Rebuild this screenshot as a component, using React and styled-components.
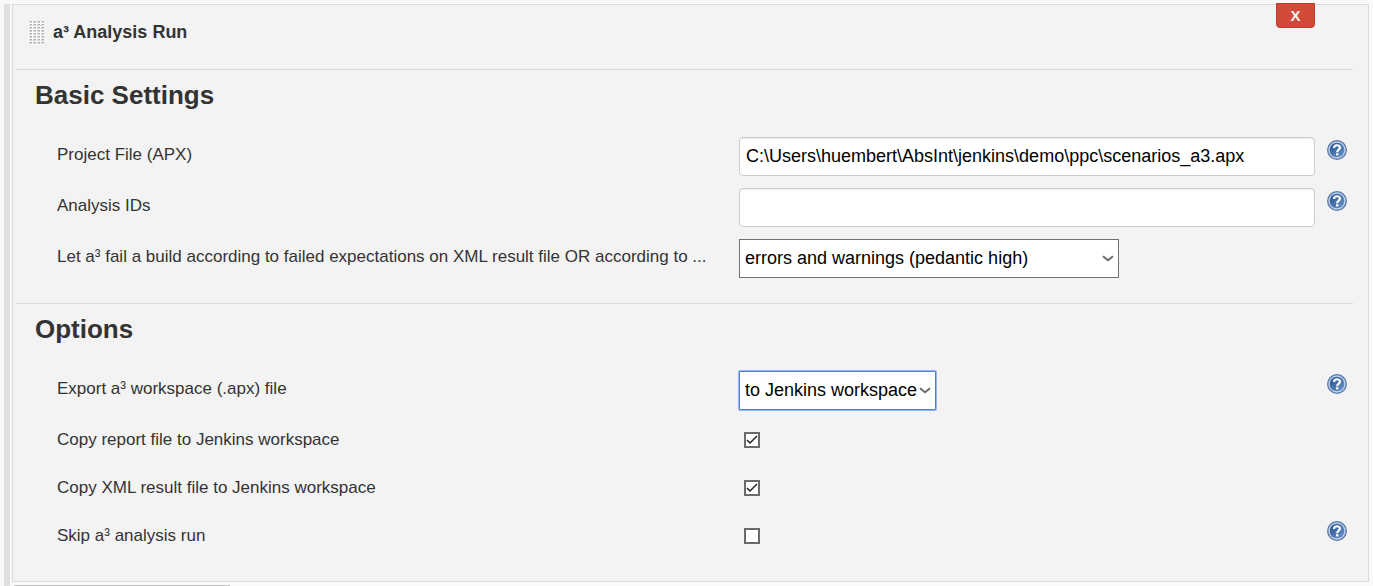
import React from "react";
import styled, { createGlobalStyle, css } from "styled-components";

const GlobalStyle = createGlobalStyle`
  *, *::before, *::after { box-sizing: border-box; }
  body {
    margin: 0;
    background: #f9f9f9;
    color: #333;
    font-family: "Liberation Sans", Arial, sans-serif;
    font-size: 18px;
    line-height: 24px;
  }
`;

const Page = styled.main`
  display: flex;
  gap: 2px;
  padding: 4px 4px 0;
`;

const Rail = styled.div`
  flex: 0 0 6px;
  background: #e0e0e0;
`;

const Column = styled.div`
  flex: 1;
  min-width: 0;
`;

const Panel = styled.form`
  border: 1px solid #d9d9d9;
  background: #f3f3f3;
  padding-bottom: 27px;
`;

const Header = styled.header`
  display: flex;
  align-items: flex-start;
  height: 64px;
  padding: 0 53px 0 15px;
`;

const Handle = styled.svg`
  width: 16px;
  height: 24px;
  margin: 16px 9px 0 0;
`;

const Title = styled.h1`
  flex: 1;
  margin: 15px 0 0;
  font-size: 18px;
  line-height: 24px;
`;

const DeleteButton = styled.button`
  width: 39px;
  height: 25px;
  margin-top: -2px;
  padding: 0;
  border: 1px solid #c03a2b;
  border-radius: 0 0 4px 4px;
  background: #d24939;
  color: #f2f2f2;
  font: bold 15px/22px "Liberation Sans", Arial, sans-serif;
`;

const Section = styled.section`
  margin: 0 15px 0 3px;
  padding: 0 6px 0 41px;
  border-top: 1px solid #d9d9d9;

  & + & { margin-top: 25px; }
`;

const Heading = styled.h2`
  margin: 0 0 26px -22px;
  padding-top: 9px;
  font-size: 26px;
  line-height: 32px;
`;

const Rows = styled.div`
  display: flex;
  flex-direction: column;
  gap: 12px;
`;

const Row = styled.div`
  display: grid;
  grid-template-columns: minmax(0, 682fr) minmax(0, 576fr) 32px;
  align-items: start;
  min-height: 36px;
`;

const Label = styled.label`
  padding: 6px 8px 6px 0;
  overflow: hidden;
  font-size: 17px;
  text-overflow: ellipsis;
  white-space: nowrap;
`;

const TextInput = styled.input`
  display: block;
  width: 100%;
  height: 39px;
  padding: 0 6px;
  border: 1px solid #ccc;
  border-radius: 4px;
  background: #fff;
  box-shadow: inset 0 1px 1px rgba(0, 0, 0, 0.075);
  color: #000;
  font: inherit;
`;

const SelectBox = styled.div`
  display: grid;
  align-items: center;
  width: ${(p) => (p.$wide ? "380px" : "197px")};
  max-width: 100%;

  > * { grid-area: 1 / 1; }
`;

const Select = styled.select`
  appearance: none;
  width: 100%;
  height: 39px;
  padding: 0 18px 2px 5px;
  border: 1px solid #707070;
  border-radius: 0;
  background: #fff;
  color: #000;
  font: inherit;
  ${(p) =>
    p.$active &&
    css`
      border-color: #5580c4;
      box-shadow: 0 0 0 1px #8fb8f5;
      border-radius: 1px;
    `}
`;

const Chevron = styled.svg`
  justify-self: end;
  width: 12px;
  height: 8px;
  margin-right: 5px;
  pointer-events: none;
`;

const Checkbox = styled.input`
  appearance: none;
  display: block;
  width: 16px;
  height: 16px;
  margin: 10px 5px;
  border: 2px solid #6b6b6b;
  background: #fff;

  &:checked {
    background: #fff
      url("data:image/svg+xml,%3Csvg xmlns='http://www.w3.org/2000/svg' viewBox='0 0 12 12'%3E%3Cpath d='M1 6l3 3 7-7' fill='none' stroke='%23222' stroke-width='1.5'/%3E%3C/svg%3E");
  }
`;

const HelpButton = styled.button`
  justify-self: end;
  width: 20px;
  height: 20px;
  margin-top: 3px;
  padding: 0;
  border: 0;
  background: none;

  svg { display: block; }
`;

const Footer = styled.div`
  padding: 3px 0 0 2px;
`;

const NextEdge = styled.div`
  width: 216px;
  height: 1px;
  background: #c4c4c4;
`;

const DOT_ROWS = [0, 1, 2, 3, 4, 5, 6, 7];
const DOT_COLUMNS = [0, 1, 2, 3];

function DragHandle() {
  return (
    <Handle viewBox="0 0 16 24" aria-hidden="true">
      <rect width="16" height="24" fill="#fafafa" />
      {DOT_ROWS.map((r) =>
        DOT_COLUMNS.map((c) => (
          <g key={`${r}-${c}`}>
            <rect x={c * 4 + 1} y={r * 3} width="3" height="2" fill="#d6d6d6" />
            <rect x={c * 4 + 2} y={r * 3} width="2" height="1" fill="#b0b0b0" />
          </g>
        ))
      )}
    </Handle>
  );
}

function Help({ topic }) {
  return (
    <HelpButton type="button" aria-label={`Help: ${topic}`}>
      <svg width="20" height="20" viewBox="0 0 20 20">
        <defs>
          <linearGradient id="helpFill" x1="0" y1="0" x2="1" y2="1">
            <stop offset="0" stopColor="#24508f" />
            <stop offset="1" stopColor="#6d97cb" />
          </linearGradient>
        </defs>
        <circle cx="10" cy="10" r="9.3" fill="#c3d3e8" stroke="#5578ad" strokeWidth="1.3" />
        <circle cx="10" cy="10" r="7.3" fill="url(#helpFill)" />
        <path d="M7 8C7 4.4 13 4.4 13 7.6C13 9.7 10.2 9.6 10.2 12.2" fill="none" stroke="#fff" strokeWidth="2.2" />
        <rect x="9" y="13.2" width="2.4" height="2.2" fill="#fff" />
      </svg>
    </HelpButton>
  );
}

function SelectField({ id, value, wide, active }) {
  return (
    <SelectBox $wide={wide}>
      <Select id={id} defaultValue={value} $active={active}>
        <option>{value}</option>
      </Select>
      <Chevron viewBox="0 0 12 8" aria-hidden="true">
        <path d="M1 1.2l5 4 5-4" fill="none" stroke="#6b6b6b" strokeWidth="2" />
      </Chevron>
    </SelectBox>
  );
}

function Field({ id, label, help, children }) {
  return (
    <Row>
      <Label htmlFor={id}>{label}</Label>
      <div>{children}</div>
      {help && <Help topic={label} />}
    </Row>
  );
}

export default function App() {
  return (
    <>
      <GlobalStyle />
      <Page>
        <Rail />
        <Column>
          <Panel>
            <Header>
              <DragHandle />
              <Title>a³ Analysis Run</Title>
              <DeleteButton type="button">X</DeleteButton>
            </Header>
            <Section>
              <Heading>Basic Settings</Heading>
              <Rows>
                <Field id="apx" label="Project File (APX)" help>
                  <TextInput id="apx" defaultValue={"C:\\Users\\huembert\\AbsInt\\jenkins\\demo\\ppc\\scenarios_a3.apx"} />
                </Field>
                <Field id="ids" label="Analysis IDs" help>
                  <TextInput id="ids" />
                </Field>
                <Field
                  id="fail"
                  label="Let a³ fail a build according to failed expectations on XML result file OR according to ..."
                >
                  <SelectField id="fail" value="errors and warnings (pedantic high)" wide />
                </Field>
              </Rows>
            </Section>
            <Section>
              <Heading>Options</Heading>
              <Rows>
                <Field id="export" label="Export a³ workspace (.apx) file" help>
                  <SelectField id="export" value="to Jenkins workspace" active />
                </Field>
                <Field id="report" label="Copy report file to Jenkins workspace">
                  <Checkbox id="report" type="checkbox" defaultChecked />
                </Field>
                <Field id="xml" label="Copy XML result file to Jenkins workspace">
                  <Checkbox id="xml" type="checkbox" defaultChecked />
                </Field>
                <Field id="skip" label="Skip a³ analysis run" help>
                  <Checkbox id="skip" type="checkbox" />
                </Field>
              </Rows>
            </Section>
          </Panel>
          <Footer>
            <NextEdge />
          </Footer>
        </Column>
      </Page>
    </>
  );
}
